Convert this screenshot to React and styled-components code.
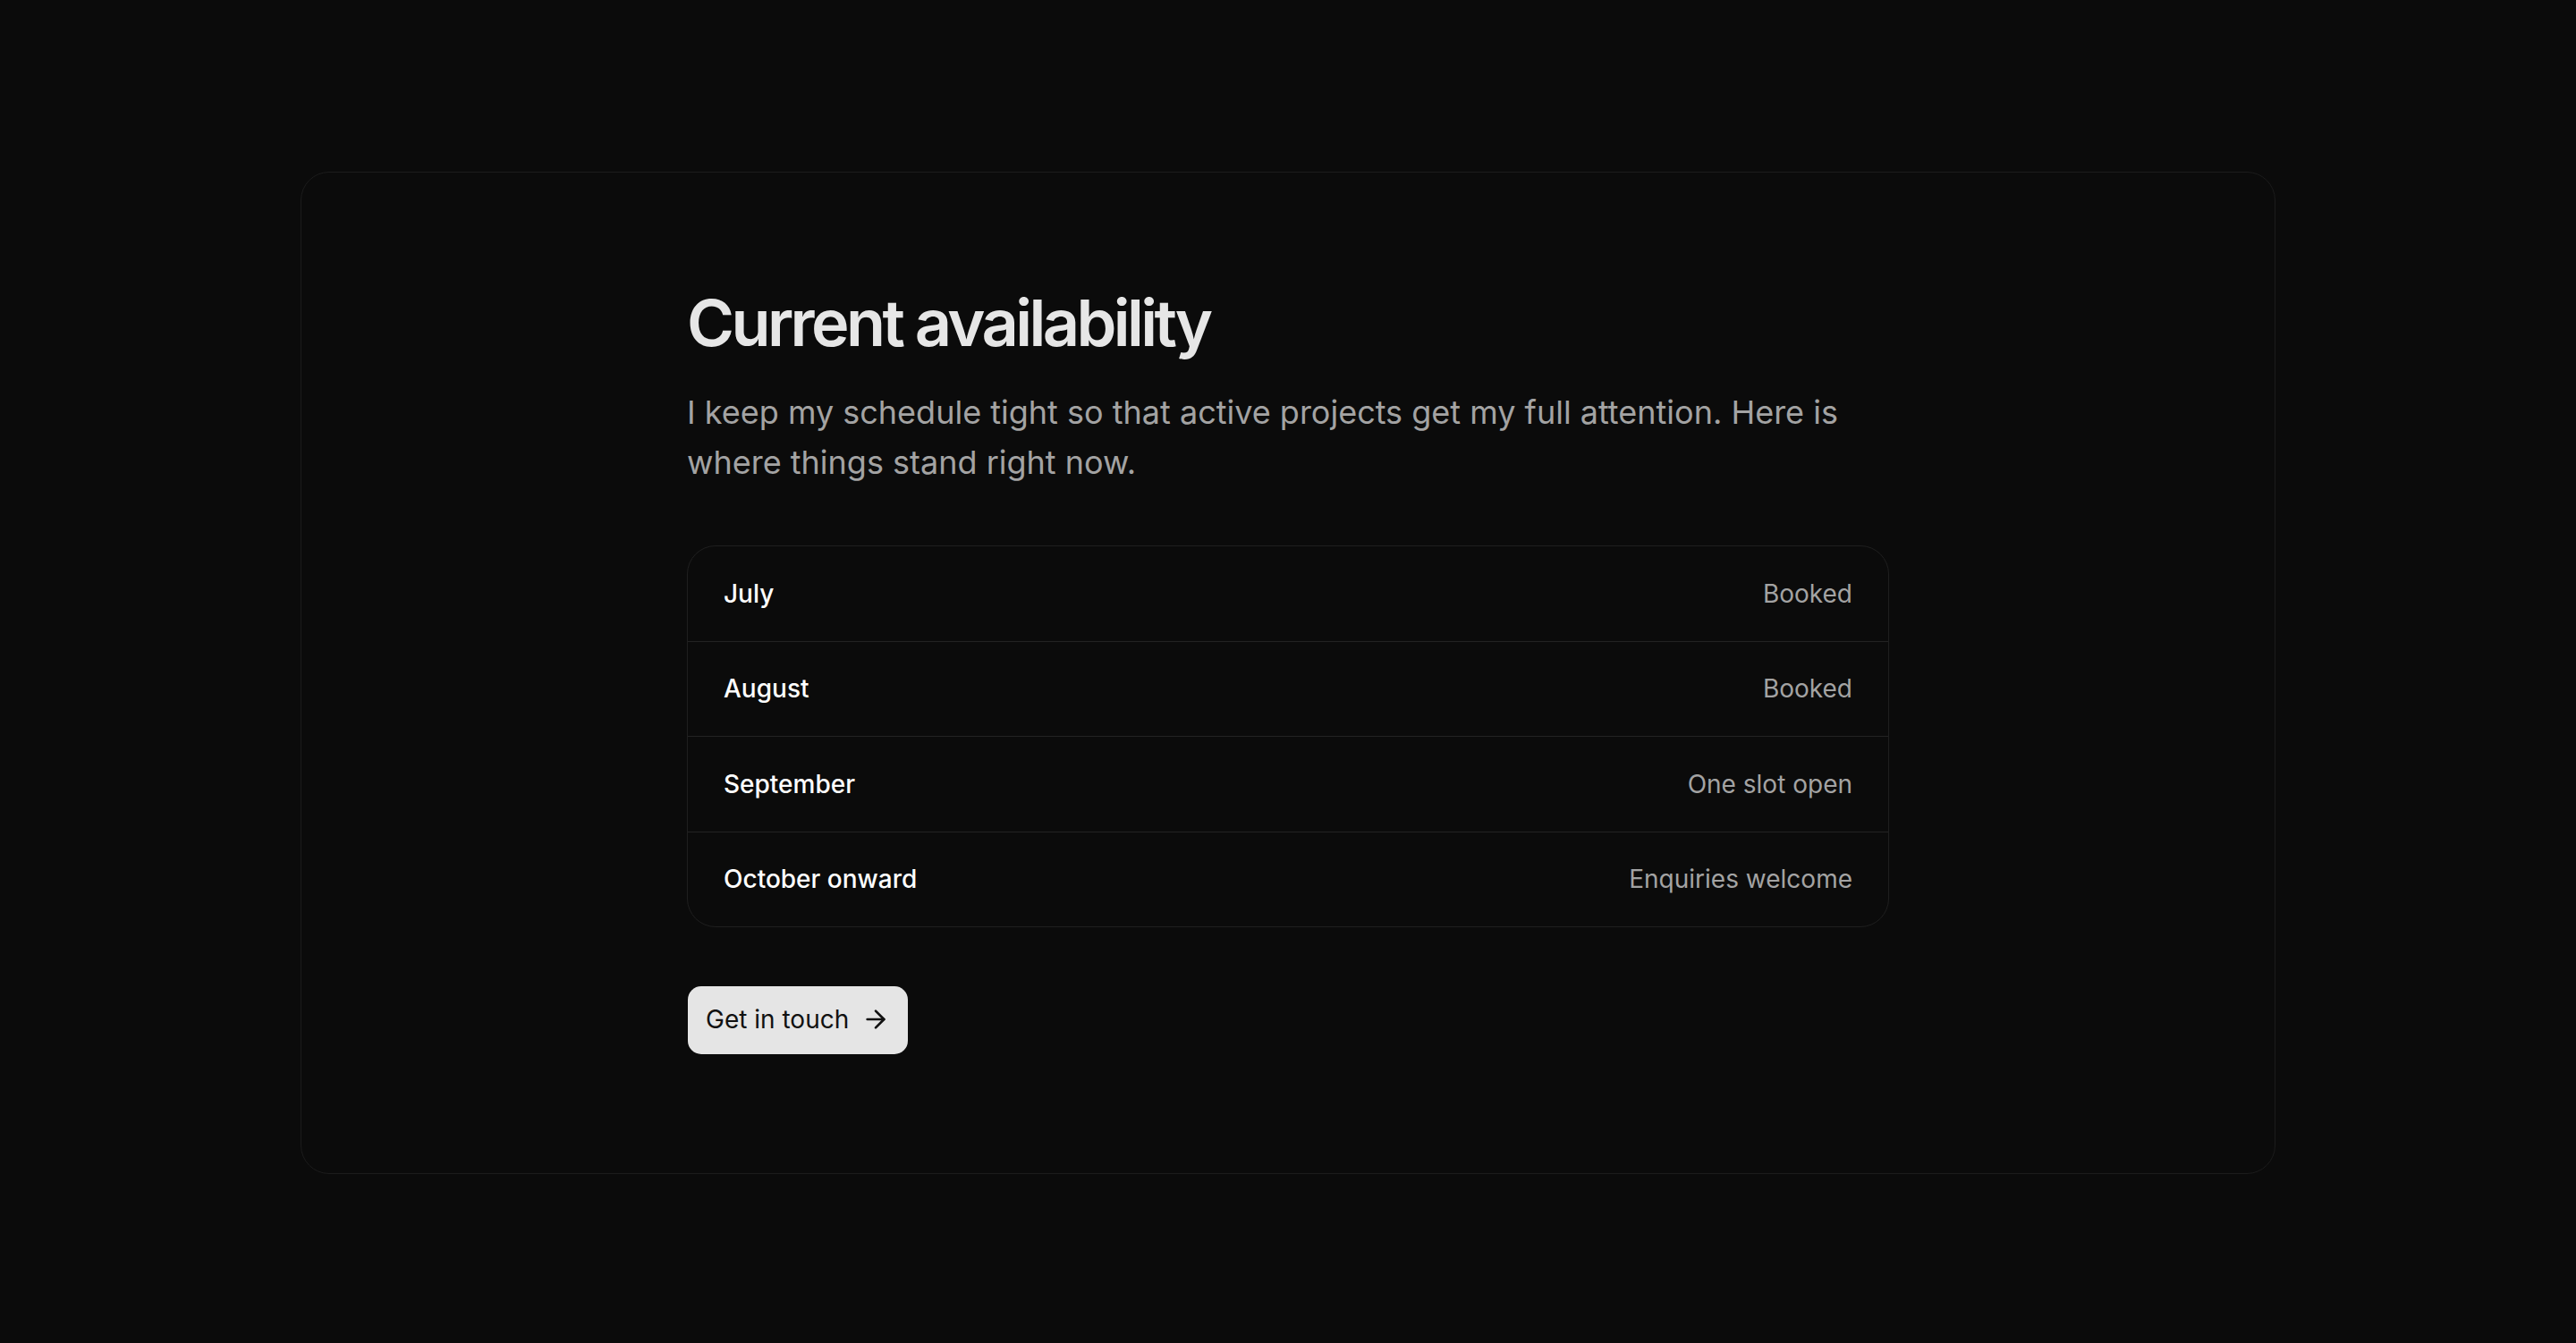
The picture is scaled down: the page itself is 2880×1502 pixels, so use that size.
import React from "react";
import styled, { createGlobalStyle } from "styled-components";
import { ArrowRight } from "lucide-react";

const GlobalStyle = createGlobalStyle`
  * { box-sizing: border-box; }
  html, body {
    margin: 0;
    padding: 0;
    background: #0b0b0b;
    font-family: Inter, "Noto Sans", "Liberation Sans", sans-serif;
    -webkit-font-smoothing: antialiased;
  }
`;

const Page = styled.main`
  min-height: 100vh;
  padding: 192px 336px;
  background: #0b0b0b;
`;

const Card = styled.section`
  border: 1px solid #1c1c1c;
  border-radius: 32px;
  background: #0b0b0b;
  padding: 128px 48px 133px;
`;

const Column = styled.div`
  max-width: 1344px;
  margin: 0 auto;
  display: flex;
  flex-direction: column;
  align-items: flex-start;
`;

const Title = styled.h2`
  margin: 0;
  font-size: 72px;
  line-height: 1.1;
  font-weight: 600;
  letter-spacing: -0.05em;
  color: #e6e6e6;
`;

const Lead = styled.p`
  margin: 33px 0 0;
  font-size: 36px;
  line-height: 56px;
  font-weight: 400;
  color: #a3a3a3;
`;

const List = styled.ul`
  list-style: none;
  margin: 65px 0 0;
  padding: 0;
  width: 100%;
  border: 1px solid #1f1f1f;
  border-radius: 32px;
  overflow: hidden;
`;

const Row = styled.li`
  display: flex;
  align-items: center;
  justify-content: space-between;
  padding: 31.75px 40px;
  font-size: 28px;
  line-height: 42px;
  & + & {
    border-top: 1px solid #232323;
  }
`;

const Month = styled.span`
  font-weight: 500;
  color: #ffffff;
`;

const Status = styled.span`
  font-weight: 400;
  color: #a3a3a3;
`;

const Action = styled.button`
  margin-top: 66px;
  margin-left: 1px;
  display: inline-flex;
  align-items: center;
  gap: 14px;
  padding: 16px 20px 18px 20px;
  border: none;
  border-radius: 15px;
  background: #e5e5e5;
  color: #111111;
  font-family: inherit;
  font-size: 28px;
  line-height: 42px;
  font-weight: 400;
  cursor: pointer;
`;

const slots = [
  { month: "July", status: "Booked" },
  { month: "August", status: "Booked" },
  { month: "September", status: "One slot open" },
  { month: "October onward", status: "Enquiries welcome" },
];

export default function App() {
  return (
    <>
      <GlobalStyle />
      <Page>
        <Card>
          <Column>
            <Title>Current availability</Title>
            <Lead>
              I keep my schedule tight so that active projects get my full
              attention. Here is where things stand right now.
            </Lead>
            <List>
              {slots.map((s) => (
                <Row key={s.month}>
                  <Month>{s.month}</Month>
                  <Status>{s.status}</Status>
                </Row>
              ))}
            </List>
            <Action type="button">
              Get in touch
              <ArrowRight size={32} strokeWidth={2} />
            </Action>
          </Column>
        </Card>
      </Page>
    </>
  );
}
